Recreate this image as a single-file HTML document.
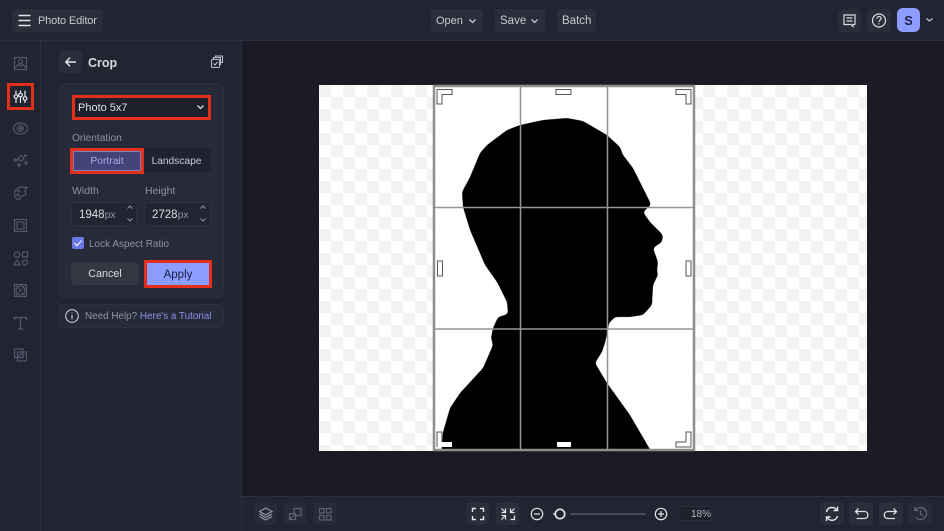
<!DOCTYPE html>
<html><head><meta charset="utf-8">
<style>
*{box-sizing:border-box}
html,body{margin:0;padding:0;width:944px;height:531px;overflow:hidden;background:#1a1b26;font-family:"Liberation Sans",sans-serif}
.a{position:absolute}
.t{position:absolute;white-space:nowrap;line-height:14px}
.b{position:absolute;background:#2a2d3a;border-radius:4px}
svg{position:absolute;overflow:visible;fill:none}
</style></head><body>
<div class="a" style="left:0;top:0;width:944px;height:41px;background:#222531;border-bottom:1px solid #2c2f3d"></div>
<div class="a" style="left:0;top:41px;width:41px;height:490px;background:#222531;border-right:1px solid #2c2f3d"></div>
<div class="a" style="left:41px;top:41px;width:201px;height:490px;background:#222531;border-right:1px solid #2c2f3d"></div>
<div class="a" style="left:242px;top:496px;width:702px;height:35px;background:#222531;border-top:1px solid #2c2f3d"></div>

<!-- top bar -->
<div class="b" style="left:12px;top:9px;width:91px;height:23px"></div>
<svg style="left:0;top:0" width="40" height="40" stroke="#e4e5ea" stroke-width="1.4"><path d="M18.5 15.5H30.5M18.5 20.5H30.5M18.5 25.5H30.5"/></svg>
<div class="t" style="left:38px;top:14px;font-size:11px;letter-spacing:-.15px;color:#c9cbd3">Photo Editor</div>
<div class="b" style="left:431px;top:9px;width:52px;height:23px"></div>
<div class="t" style="left:436px;top:14px;font-size:11px;color:#c9cbd3">Open</div>
<svg style="left:0;top:0" width="10" height="10" stroke="#c9cbd3" stroke-width="1.3"><path d="M469.5 19.5L472.5 22.5L475.5 19.5"/></svg>
<div class="b" style="left:495px;top:9px;width:50px;height:23px"></div>
<div class="t" style="left:500px;top:14px;font-size:11.5px;color:#c9cbd3">Save</div>
<svg style="left:0;top:0" width="10" height="10" stroke="#c9cbd3" stroke-width="1.3"><path d="M531.5 19.5L534.5 22.5L537.5 19.5"/></svg>
<div class="b" style="left:557px;top:9px;width:39px;height:23px"></div>
<div class="t" style="left:562px;top:14px;font-size:11.5px;color:#c9cbd3">Batch</div>
<div class="b" style="left:838px;top:9px;width:23px;height:23px"></div>
<svg style="left:0;top:0" width="10" height="10" stroke="#dcdde2" stroke-width="1.2"><path d="M844 15H855V24.5H853V26.5L851 24.5H844ZM846.5 18H852.5M846.5 21H852.5"/></svg>
<div class="b" style="left:867px;top:9px;width:24px;height:23px"></div>
<svg style="left:0;top:0" width="10" height="10" stroke="#dcdde2" stroke-width="1.2"><circle cx="879" cy="20.5" r="6.5"/><path d="M876.9 18.6C877 15.8 881.2 15.9 881.1 18.6C881 20 879 20 879 22"/><path d="M879 23.2V24.4"/></svg>
<div class="a" style="left:897px;top:8px;width:23px;height:24px;border-radius:6px;background:#8c9dff"></div>
<div class="t" style="left:897px;top:14px;width:23px;text-align:center;font-size:12.5px;font-weight:bold;color:#1d2040">S</div>
<svg style="left:0;top:0" width="10" height="10" stroke="#c9cbd3" stroke-width="1.2"><path d="M926.5 18.5L929.5 21L932.5 18.5"/></svg>

<!-- left rail icons -->
<svg style="left:0;top:0" width="41" height="400" stroke="#53566c" stroke-width="1.2">
<rect x="14.5" y="57.5" width="12" height="12"/><circle cx="20.5" cy="61.5" r="2"/><path d="M14.5 68L18.5 64.5L20.5 66L22.5 64.5L26.5 68"/>
<ellipse cx="20.5" cy="128.5" rx="7" ry="5.5"/><circle cx="20.5" cy="128.5" r="3"/><circle cx="20.5" cy="128.5" r="1" fill="#53566c"/>
<path d="M21 155.5L24 158.5L21 161.5L18 158.5ZM15.5 158.5L17 160L15.5 161.5L14 160ZM26 161.5L27.500 163L26 164.500L24.500 163ZM19 163.500L20.500 165L19 166.500L17.500 165ZM25.500 154.500L26.500 155.500L25.500 156.500L24.500 155.500Z"/>
<path d="M25 187.500C20 185.500 14.500 189 14.500 194C14.500 197.500 17 200 19.500 199.500C21.500 199 19.500 197 21.500 196C23.500 195 25.500 196 26 193.500C26.200 192 24 191.500 25 190.500L27 187.500Z"/><circle cx="18.500" cy="191" r=".8"/><circle cx="18" cy="195" r=".8"/>
<rect x="14.500" y="219.500" width="12" height="12"/><rect x="17" y="222" width="7" height="7"/>
<circle cx="17" cy="254.500" r="2.800"/><rect x="22.500" y="252" width="5" height="5"/><path d="M17 260L20 265H14Z"/><circle cx="25" cy="262.500" r="2.500"/>
<rect x="14.500" y="284.500" width="12" height="12"/><circle cx="20.500" cy="290.500" r="4.500"/><path d="M16 285L25 296M25 285L16 296" stroke-width=".7"/>
<path d="M14.500 320V317.500H26.500V320M20.500 317.500V329M18 329H23" stroke-width="1.300"/>
<rect x="14.500" y="349" width="8.500" height="8.500"/><rect x="17.500" y="352" width="9" height="9"/><path d="M18 357L23 352M20.500 358.500L24.500 354.500" stroke-width=".9"/>
</svg>
<div class="a" style="left:7px;top:83px;width:27px;height:27px;border:3px solid #e2301a;background:#1f2230"></div>
<svg style="left:0;top:0" width="41" height="120" stroke="#f0f0f4" stroke-width="1.200"><path d="M16 90.500V94M16 99V103M20.500 90.500V92.500M20.500 97.500V103M25 90.500V96M25 101V103"/><circle cx="16" cy="96.500" r="1.800"/><circle cx="20.500" cy="95" r="1.800"/><circle cx="25" cy="98.500" r="1.800"/></svg>

<!-- crop header -->
<div class="b" style="left:59px;top:50px;width:23px;height:23px;background:#2a2d3a"></div>
<svg style="left:0;top:0" width="10" height="10" stroke="#e8e9ee" stroke-width="1.400"><path d="M76 62H66M70 57.800L65.800 62L70 66.200"/></svg>
<div class="t" style="left:88px;top:56px;font-size:12.500px;font-weight:bold;color:#d9dae0">Crop</div>
<svg style="left:0;top:0" width="10" height="10" stroke="#b9bccb" stroke-width="1.100"><rect x="211.500" y="59.500" width="8" height="8" rx="1"/><path d="M213.500 59.500V57.500H220.500V64.500H219.500M215.500 57.500V56H222.500V62.500H220.500"/><path d="M213.500 63.500L215 65L217.500 62"/></svg>

<!-- panel card -->
<div class="a" style="left:59px;top:83px;width:165px;height:215px;background:#272a38;border:1px solid #2d3040;border-radius:6px"></div>
<div class="a" style="left:72px;top:95px;width:139px;height:25px;background:#1d1f2b;border:3px solid #e2301a"></div>
<div class="t" style="left:78px;top:101px;font-size:11px;color:#e0e1e6">Photo 5x7</div>
<svg style="left:0;top:0" width="10" height="10" stroke="#d9dae0" stroke-width="1.300"><path d="M197.500 105.500L200.500 108.500L203.500 105.500"/></svg>
<div class="t" style="left:72px;top:132px;font-size:10.200px;color:#8f92a3">Orientation</div>
<div class="a" style="left:142px;top:148px;width:69px;height:24px;background:#1f2230;border-radius:0 4px 4px 0"></div>
<div class="a" style="left:70px;top:148px;width:74px;height:26px;background:#43437a;border:3px solid #e2301a;box-shadow:inset 0 0 0 1px #7f80b5"></div>
<div class="t" style="left:70px;top:155px;width:74px;text-align:center;font-size:10.300px;color:#a9abe8">Portrait</div>
<div class="t" style="left:142px;top:155px;width:69px;text-align:center;font-size:10.200px;color:#c9cbd3">Landscape</div>
<div class="t" style="left:72px;top:184px;font-size:10.500px;color:#8f92a3">Width</div>
<div class="t" style="left:145px;top:184px;font-size:10.500px;color:#8f92a3">Height</div>
<div class="a" style="left:71px;top:202px;width:66px;height:24px;background:#222431;border:1px solid #2e3142;border-radius:3px"></div>
<div class="a" style="left:144px;top:202px;width:67px;height:24px;background:#222431;border:1px solid #2e3142;border-radius:3px"></div>
<div class="t" style="left:79px;top:208px;font-size:11.500px;color:#dcdde2">1948<span style="color:#8f92a3;font-size:10.500px">px</span></div>
<div class="t" style="left:152px;top:208px;font-size:11.500px;color:#dcdde2">2728<span style="color:#8f92a3;font-size:10.500px">px</span></div>
<svg style="left:0;top:0" width="10" height="10" stroke="#8f92a3" stroke-width="1"><path d="M127.500 208.500L130 206L132.500 208.500M127.500 218.500L130 221L132.500 218.500M200.500 208.500L203 206L205.500 208.500M200.500 218.500L203 221L205.500 218.500"/></svg>
<div class="a" style="left:72px;top:237px;width:12px;height:12px;background:#6a79e6;border-radius:2px"></div>
<svg style="left:0;top:0" width="10" height="10" stroke="#e8e9ff" stroke-width="1.300"><path d="M74.500 243L77 245.700L81.500 240.500"/></svg>
<div class="t" style="left:89px;top:238px;font-size:10px;color:#8f92a3">Lock Aspect Ratio</div>
<div class="b" style="left:71px;top:262px;width:68px;height:23px;background:#343642"></div>
<div class="t" style="left:71px;top:267px;width:68px;text-align:center;font-size:10.800px;color:#d9dae0">Cancel</div>
<div class="a" style="left:144px;top:260px;width:68px;height:28px;background:#8c9dff;border:3px solid #e2301a"></div>
<div class="t" style="left:144px;top:268px;width:68px;text-align:center;font-size:11.500px;color:#1d2040">Apply</div>
<div class="a" style="left:59px;top:304px;width:165px;height:24px;background:#272a38;border:1px solid #2d3040;border-radius:5px"></div>
<svg style="left:0;top:0" width="10" height="10" stroke="#c9cbd3" stroke-width="1.100"><circle cx="72" cy="316" r="6.300"/><path d="M72 315V319.500M72 312.500V313.500"/></svg>
<div class="t" style="left:85px;top:309px;font-size:9.900px;line-height:14px;color:#8f92a3;padding-top:0.500px">Need Help? <span style="color:#8c93e8">Here's a Tutorial</span></div>

<!-- canvas -->
<svg style="left:0;top:0" width="944" height="531">
<defs>
<pattern id="c" x="319" y="85" width="24" height="24" patternUnits="userSpaceOnUse"><rect width="24" height="24" fill="#fff"/><rect width="12" height="12" fill="#f3f3f3"/><rect x="12" y="12" width="12" height="12" fill="#f3f3f3"/></pattern>
<clipPath id="k"><rect x="433" y="85" width="262" height="366"/></clipPath>
<filter id="s" x="-10%" y="-10%" width="120%" height="120%" color-interpolation-filters="sRGB"><feGaussianBlur stdDeviation="1.800"/><feColorMatrix type="matrix" values="0 0 0 0 0 0 0 0 0 0 0 0 0 0 0 0 0 0 6 -2.500"/></filter>
</defs>
<rect x="319" y="85" width="548" height="366" fill="url(#c)"/>
<rect x="433" y="85" width="262" height="366" fill="#fff"/>
<g clip-path="url(#k)"><path fill="#000" filter="url(#s)" d="M520 125L543 120L567 118L583 121L607 135L620 147L623 155L633 168L650 202L651 205L643 212L650 222L663 235L662 242L653 248L658 262L657 270L658 275L653 285L652 305L643 315L630 317L615 317L609 323L608 330L605 343L602 352L595 363L607 383L630 415L662 470L440 470L443 432L450 408L460 393L483 368L493 345L491 338L493 328L498 317L508 314L507 302L497 282L485 265L470 230L463 207L462 192L470 177L480 153L487 145L507 130Z"/></g>
<path stroke="#969696" fill="none" stroke-width="1.500" d="M520.500 85V451M607.500 85V451M433 207.500H695M433 329H695"/>
<rect x="434" y="86" width="260" height="364" fill="none" stroke="#8e8e8e" stroke-width="2.500"/>
<g fill="#fff" stroke="#555" stroke-width="1">
<path d="M437 89.500H452V94.500H442V104H437Z"/>
<path d="M691 89.500H676V94.500H686V104H691Z"/>
<rect x="556" y="89.500" width="15" height="5"/>
<rect x="437.500" y="261" width="5" height="15"/>
<rect x="686" y="261" width="5" height="15"/>
<path d="M691 432H686V442H676V447H691Z"/>
</g>
<path fill="#fff" d="M437 432H442V442H452V447H437ZM557 442H571V447H557Z"/>
<path stroke="#555" fill="none" d="M437 447V432H442V442"/>
</svg>

<!-- bottom bar -->
<div class="b" style="left:254px;top:502px;width:23px;height:23px;background:#272a37"></div>
<div class="b" style="left:284px;top:502px;width:23px;height:23px;background:#272a37"></div>
<div class="b" style="left:313px;top:502px;width:23px;height:23px;background:#272a37"></div>
<svg style="left:0;top:0" width="10" height="10" stroke="#9a9cab" stroke-width="1.100"><path d="M265.500 508L272 511.500L265.500 515L259.500 511.500ZM259.500 514L265.500 517.500L272 514M259.500 516.500L265.500 520L272 516.500"/></svg>
<svg style="left:0;top:0" width="10" height="10" stroke="#5f6274" stroke-width="1.200"><path d="M289.500 513.500H295.500V519.500H289.500ZM294 513.500V508.500H301V515.500H295.500M289.500 519.500L295.500 513.500"/></svg>
<svg style="left:0;top:0" width="10" height="10" stroke="#5f6274" stroke-width="1.200"><rect x="319.500" y="508.500" width="4.500" height="4.500"/><rect x="326.500" y="508.500" width="4.500" height="4.500"/><rect x="319.500" y="515.500" width="4.500" height="4.500"/><rect x="326.500" y="515.500" width="4.500" height="4.500"/></svg>
<div class="b" style="left:466px;top:502px;width:23px;height:23px"></div>
<div class="b" style="left:496px;top:502px;width:23px;height:23px"></div>
<svg style="left:0;top:0" width="10" height="10" stroke="#e4e5ea" stroke-width="1.400"><path d="M472.500 512V508.500H476M480 508.500H483.500V512M483.500 516V519.500H480M476 519.500H472.500V516"/>
<path d="M501.500 512.500H505.500V508.500M501.500 508.500L505.500 512.500M510.500 508.500V512.500H514.500M514.500 508.500L510.500 512.500M501.500 515.500H505.500V519.500M505.500 515.500L501.500 519.500M514.500 515.500V519.500H510.500" stroke-width="1.200"/></svg>
<svg style="left:0;top:0" width="10" height="10" stroke="#e4e5ea" stroke-width="1.200"><circle cx="537" cy="514" r="5.700"/><path d="M534 514H540"/><path d="M570 514H646" stroke="#6c6e7d" stroke-width="1"/><path d="M553 514H555"/><circle cx="560" cy="514" r="4.700" stroke-width="1.700" fill="#222531"/><circle cx="661" cy="514" r="5.700"/><path d="M658 514H664M661 511V517"/></svg>
<div class="a" style="left:678px;top:506px;width:34px;height:15px;background:#1e202c;border:1px solid #2b2e3c;border-radius:2px"></div>
<div class="t" style="left:691px;top:508px;font-size:10px;color:#b5b7c3">18%</div>
<div class="b" style="left:820px;top:502px;width:24px;height:23px"></div>
<div class="b" style="left:849px;top:502px;width:24px;height:23px"></div>
<div class="b" style="left:879px;top:502px;width:24px;height:23px"></div>
<div class="b" style="left:908px;top:502px;width:24px;height:23px;background:#272a37"></div>
<svg style="left:0;top:0" width="10" height="10" stroke="#e8e9ee" stroke-width="1.400"><path d="M826.500 512C827.500 506.500 834.500 506 837 510.500M837.500 516C836.500 521 829 522 827 517"/><path d="M833.500 510.500H837.500V506.500M830.500 517H826.500V521"/></svg>
<svg style="left:0;top:0" width="10" height="10" stroke="#dcdde2" stroke-width="1.300"><path d="M855.500 511.500H864.500C869 511.500 869 518.500 864.500 518.500H856.500M858.500 508.500L855.500 511.500L858.500 514.500"/></svg>
<svg style="left:0;top:0" width="10" height="10" stroke="#dcdde2" stroke-width="1.300"><path d="M896.500 511.500H888C883 511.500 883 518.500 888 518.500H895M893.500 508.500L896.500 511.500L893.500 514.500"/></svg>
<svg style="left:0;top:0" width="10" height="10" stroke="#666979" stroke-width="1.200"><path d="M915.500 510C918 506 926 507 926.500 513C927 519 919 522 916 517M915 507V510.500H918.500M920.500 510.500V514L923 516"/></svg>
</body></html>
